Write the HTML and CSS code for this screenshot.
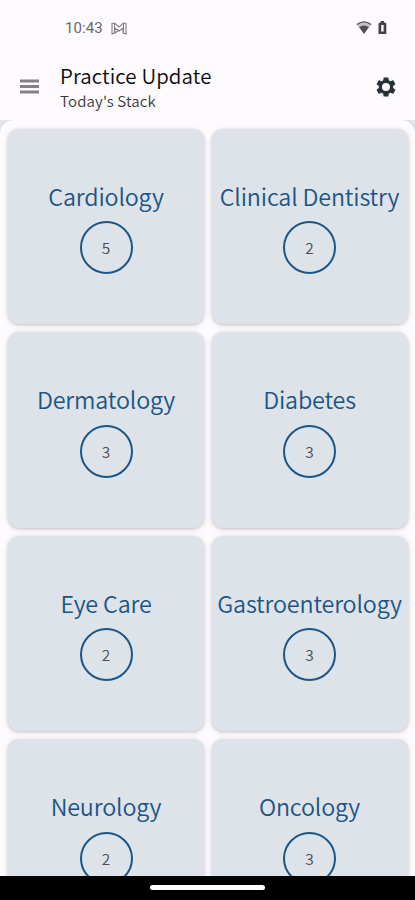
FILE: index.html
```html
<!DOCTYPE html>
<html lang="en">
<head>
<meta charset="utf-8">
<title>Practice Update</title>
<link rel="stylesheet" href="styles.css">
</head>
<body>
<div class="screen">
  <div class="status">
    <span class="time">10:43</span>
    <svg class="gmail" width="16" height="13" viewBox="0 0 16 13" fill="none" stroke="#838086" stroke-width="1.1"><path d="M1 12V1.500L3.500 1 8 5 12.500 1 15 1.500V12L12.200 11V6L8 9 3.800 6V11Z"/><path d="M3.500 1V11M12.500 1V11M4 11L8 8"/></svg>
    <svg class="wifi" width="16" height="14" viewBox="0 0 16 14"><path d="M.5 3.500Q8-2.200 15.500 3.500L8 13Z" fill="#c4c2c7"/><path d="M1 3.500Q8-1.700 15 3.500" fill="none" stroke="#504d52" stroke-width="1.200"/><path d="M3.200 6Q8 2.800 12.800 6L8 13Z" fill="#504d52"/></svg>
    <svg class="battery" width="9" height="14" viewBox="0 0 9 14"><path fill="#444146" fill-rule="evenodd" d="M2.800 0H6V1.500H7.200L8.300 2.600V13H.5V2.600L1.600 1.500H2.800ZM3.200 4V10.500H5.600V4Z"/></svg>
  </div>
  <header class="bar">
    <svg class="menu" width="19" height="15" viewBox="0 0 19 15" fill="#858286"><path d="M0 .5H19V3.500H0ZM0 6H19V9H0ZM0 11.500H19V14.500H0Z"/></svg>
    <div class="heading">
      <h1>Practice Update</h1>
      <p>Today's Stack</p>
    </div>
    <svg class="gear" width="24" height="24" viewBox="0 0 24 24"><path fill="#263238" d="M19.140 12.940c.04-.3.060-.61.060-.94 0-.32-.02-.64-.07-.94l2.030-1.580c.18-.14.230-.41.120-.61l-1.920-3.320c-.12-.22-.37-.29-.59-.22l-2.390.960c-.5-.38-1.030-.7-1.620-.94l-.36-2.540c-.04-.24-.24-.41-.48-.41h-3.840c-.24 0-.43.170-.47.410l-.36 2.540c-.59.240-1.130.570-1.620.940l-2.390-.96c-.22-.08-.47 0-.59.220L2.740 8.870c-.12.210-.08.470.120.610l2.030 1.580c-.05.300-.09.630-.09.940s.02.640.070.940l-2.030 1.580c-.18.140-.23.410-.12.610l1.920 3.320c.12.220.370.290.590.220l2.390-.96c.5.380 1.030.700 1.620.940l.36 2.540c.05.240.240.410.480.410h3.840c.24 0 .44-.17.470-.41l.36-2.540c.59-.24 1.130-.56 1.620-.94l2.390.960c.22.080.470 0 .59-.22l1.920-3.320c.12-.22.070-.47-.12-.61zM12 16a4 4 0 1 1 0-8 4 4 0 0 1 0 8z"/></svg>
  </header>
  <div class="backdrop">
    <main class="grid">
      <section class="card"><h2>Cardiology</h2><span class="count">5</span></section>
      <section class="card"><h2>Clinical Dentistry</h2><span class="count">2</span></section>
      <section class="card"><h2>Dermatology</h2><span class="count">3</span></section>
      <section class="card"><h2>Diabetes</h2><span class="count">3</span></section>
      <section class="card"><h2>Eye Care</h2><span class="count">2</span></section>
      <section class="card"><h2>Gastroenterology</h2><span class="count">3</span></section>
      <section class="card"><h2>Neurology</h2><span class="count">2</span></section>
      <section class="card"><h2>Oncology</h2><span class="count">3</span></section>
    </main>
  </div>
  <footer class="nav"><span class="handle"></span></footer>
</div>
</body>
</html>
```
FILE: styles.css
```css
* { box-sizing: border-box; }
body, h1, h2, p { margin: 0; font-weight: 350; }
body {
  background: #fdfbfe;
  font-family: "Noto Sans CJK SC", "Noto Sans", sans-serif;
}
.screen {
  width: 415px;
  height: 900px;
  overflow: hidden;
  display: flex;
  flex-direction: column;
}
.status {
  flex: none;
  height: 56px;
  padding: 0 28px 0 65px;
  display: flex;
  align-items: center;
}
.time {
  font: 15px/20px Roboto, sans-serif;
  letter-spacing: .1px;
  color: #69666b;
}
.gmail { margin-left: 8px; }
.wifi { margin-left: auto; }
.battery { margin-left: 6px; }
.bar {
  flex: none;
  height: 64px;
  padding: 0 17px 3px 20px;
  display: flex;
  align-items: center;
}
.heading { margin-left: 21px; padding-top: 2px; flex: 1; }
h1 {
  font-size: 20.5px;
  line-height: 26px;
  letter-spacing: .1px;
  color: #0c0b0e;
}
p {
  font-size: 15px;
  line-height: 25px;
  letter-spacing: .15px;
  color: #3a383c;
}
.backdrop {
  flex: 1;
  min-height: 0;
  overflow: hidden;
  background: #e3e6e9;
}
.grid {
  height: 900px;
  padding: 8.500px 7px 0 8px;
  background: #fdfbfe;
  border-radius: 14px 14px 0 0;
  box-shadow: 0 0 4px #d8d8de;
  display: grid;
  grid-template-columns: 196px 196px;
  grid-auto-rows: 195.500px;
  gap: 8px 7.500px;
}
.card {
  min-width: 0;
  padding-top: 49px;
  border-radius: 11px;
  background: #dde3e8;
  box-shadow: 0 1px 3px rgba(70, 45, 60, .2), 0 1px 6px rgba(70, 45, 60, .12);
  display: flex;
  flex-direction: column;
  align-items: center;
}
h2 {
  font-size: 23.300px;
  line-height: 36px;
  letter-spacing: -.15px;
  white-space: nowrap;
  color: #1a5586;
}
.count {
  width: 53px;
  height: 53px;
  margin-top: 7.500px;
  padding-bottom: 1px;
  border: 2px solid #1c5688;
  border-radius: 50%;
  display: flex;
  align-items: center;
  justify-content: center;
  font-size: 15.5px;
  line-height: 24px;
  color: #4b4d51;
}
.nav {
  flex: none;
  height: 24px;
  background: #000;
  display: flex;
  justify-content: center;
}
.handle {
  width: 115px;
  height: 5px;
  margin-top: 9px;
  border-radius: 3px;
  background: #fff;
}
```
